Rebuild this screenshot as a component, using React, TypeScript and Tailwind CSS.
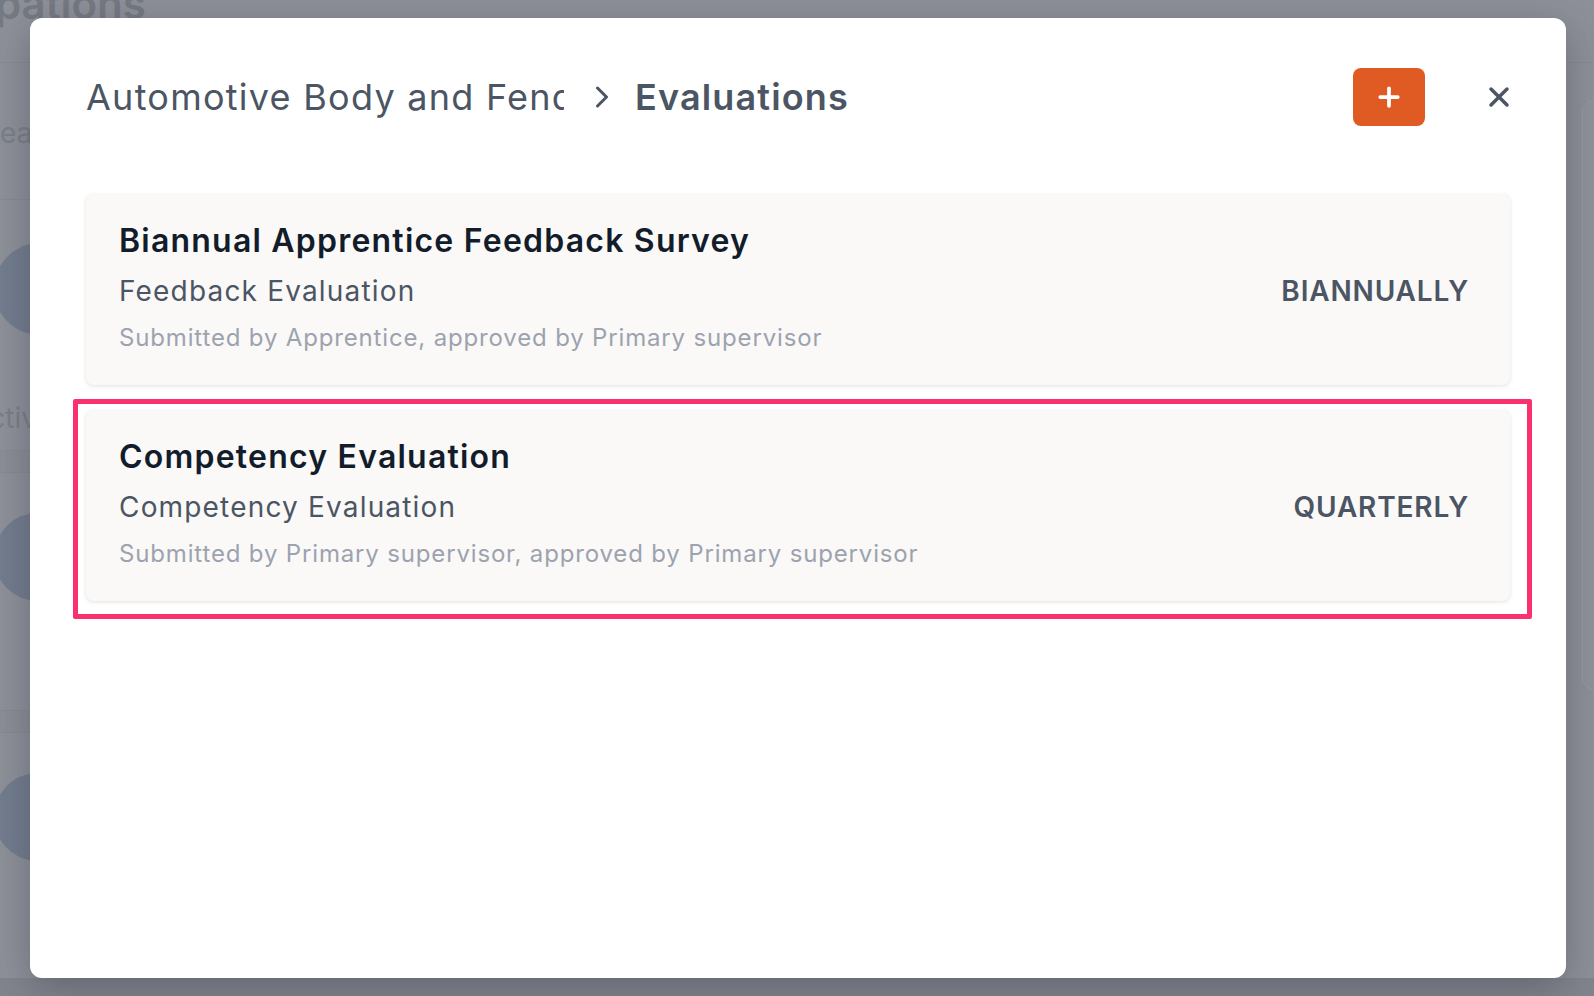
import { Plus } from 'lucide-react'

const evaluations = [
  {
    title: 'Biannual Apprentice Feedback Survey',
    kind: 'Feedback Evaluation',
    flow: 'Submitted by Apprentice, approved by Primary supervisor',
    frequency: 'BIANNUALLY',
  },
  {
    title: 'Competency Evaluation',
    kind: 'Competency Evaluation',
    flow: 'Submitted by Primary supervisor, approved by Primary supervisor',
    frequency: 'QUARTERLY',
    highlighted: true,
  },
]

// the occupations page sitting behind the dimmed overlay
function BackdropPage() {
  return (
    <div className="absolute inset-0 flex flex-col overflow-hidden bg-[#8e9199]">
      <div className="h-[63px] shrink-0 border-b border-[#878a92]">
        <div className="-ml-[112px] -mt-[17px] text-[42px] font-semibold leading-none text-[#767a83]">Occupations</div>
      </div>
      <div className="flex flex-1">
        <div className="flex w-[320px] flex-col">
          <div className="flex h-[137px] items-center border-b border-[#878a92]">
            <span className="-ml-[18px] pt-[4px] text-[28px] text-[#7b7f88]">Search</span>
          </div>
          <div className="flex h-[250px] flex-col">
            <div className="-ml-[6px] mt-[43px] h-[92px] w-[92px] rounded-full bg-[#737d8e]" />
            <span className="-ml-[30px] mt-[62px] text-[28px] text-[#7b7f88]">Active</span>
          </div>
          <div className="h-[23px] border-y border-[#878a92] bg-[#8b8e96]" />
          <div className="h-[237px]">
            <div className="-ml-[6px] mt-[40px] h-[88px] w-[92px] rounded-full bg-[#737d8e]" />
          </div>
          <div className="h-[23px] border-y border-[#878a92] bg-[#8b8e96]" />
          <div className="flex-1">
            <div className="-ml-[6px] mt-[40px] h-[88px] w-[92px] rounded-full bg-[#737d8e]" />
          </div>
        </div>
        <div className="ml-auto -mr-[20px] mt-[37px] h-[590px] w-[32px] rounded-xl border border-[#979aa2] bg-[#90939b]" />
      </div>
      <div className="h-[18px] shrink-0 bg-[#82858d]" />
    </div>
  )
}

function EvaluationCard({ item }: { item: (typeof evaluations)[number] }) {
  return (
    <div className="relative">
      {item.highlighted && (
        <div className="pointer-events-none absolute -bottom-[18px] -left-[13px] -right-[22px] -top-[11px] rounded-[2px] border-[5px] border-[#fb316f]" />
      )}
      <div className="flex items-center justify-between rounded-lg bg-[#faf9f7] pb-[31px] pl-[33px] pr-[41px] pt-[27px] shadow-[0_1px_4px_rgba(0,0,0,0.12)]">
        <div className="flex flex-col gap-[12px]">
          <h3 className="text-[32px] font-semibold leading-[40px] tracking-[0.038em] text-[#131c2b]">{item.title}</h3>
          <div className="flex flex-col gap-[13px]">
            <p className="text-[28px] leading-[36px] tracking-[0.042em] text-[#4b5563]">{item.kind}</p>
            <p className="text-[24px] leading-[32px] tracking-[0.035em] text-[#9ca3af]">{item.flow}</p>
          </div>
        </div>
        <span className="pt-[6px] text-[28px] font-semibold tracking-[0.03em] text-[#4b5563]">{item.frequency}</span>
      </div>
    </div>
  )
}

export default function App() {
  return (
    <div className="relative h-[996px] w-[1594px] overflow-hidden font-['Inter','Noto_Sans',sans-serif]">
      <BackdropPage />
      <div className="relative flex pl-[30px] pt-[18px]">
        <div className="flex h-[960px] w-[1536px] flex-col rounded-xl bg-white px-[56px] pt-[39px] shadow-[0_10px_40px_rgba(40,44,56,0.35)]">
          <div className="flex h-[80px] items-center">
            <div className="flex min-w-0 flex-1 items-center text-[36px] text-[#4b5563]">
              <span className="max-w-[478px] overflow-hidden whitespace-nowrap tracking-[0.035em]">
                Automotive Body and Fender Repair
              </span>
              <svg width="14" height="22" viewBox="0 0 14 22" fill="none" className="ml-[31px] mr-[26px] shrink-0">
                <path d="M2.5 2 L11.5 11 L2.5 20" stroke="#4b5563" strokeWidth="3" strokeLinecap="round" strokeLinejoin="round" />
              </svg>
              <span className="font-semibold tracking-[0.032em]">Evaluations</span>
            </div>
            <button className="flex h-[58px] w-[72px] items-center justify-center rounded-lg bg-[#e05a24] text-white">
              <Plus size={30} strokeWidth={3} />
            </button>
            <button className="ml-[63px] flex h-[22px] w-[22px] items-center justify-center text-[#4b5563]">
              <svg width="22" height="22" viewBox="0 0 22 22" fill="none">
                <path d="M3 3 L19 19 M19 3 L3 19" stroke="currentColor" strokeWidth="3.5" strokeLinecap="round" />
              </svg>
            </button>
          </div>
          <div className="mt-[57px] flex flex-col gap-[25px]">
            {evaluations.map((item) => (
              <EvaluationCard key={item.title} item={item} />
            ))}
          </div>
        </div>
      </div>
    </div>
  )
}
